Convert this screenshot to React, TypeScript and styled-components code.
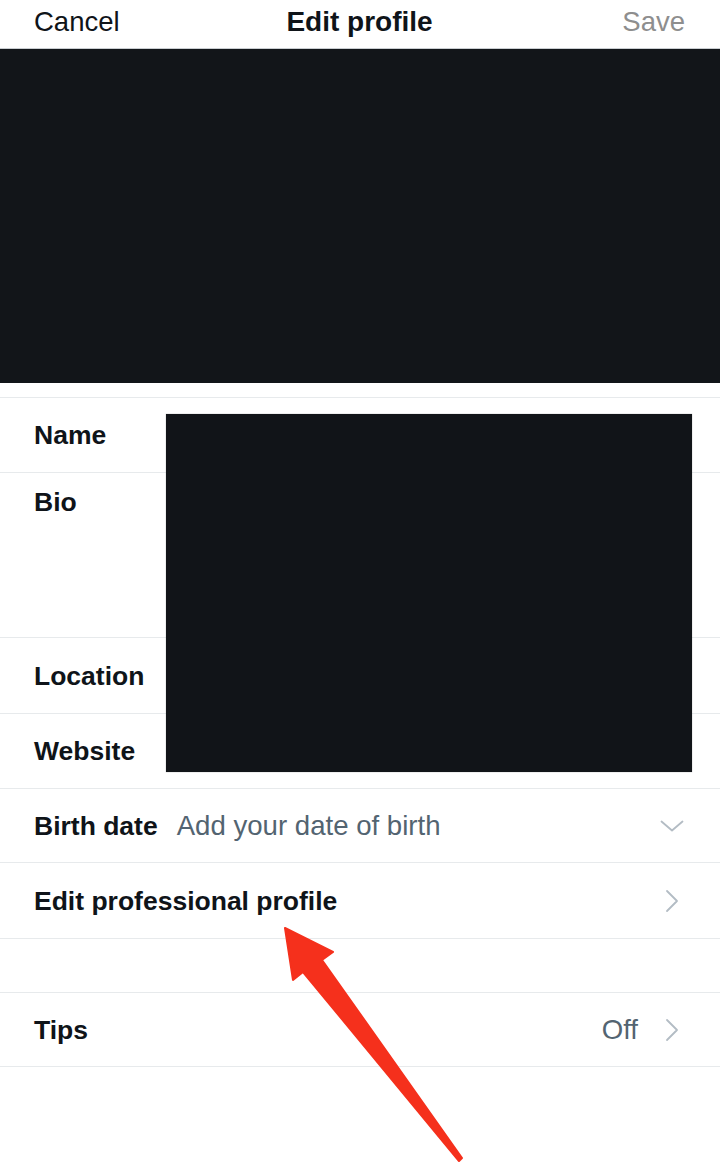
import React from 'react';
import styled, { createGlobalStyle } from 'styled-components';

const GlobalStyle = createGlobalStyle`
  html, body {
    margin: 0;
    padding: 0;
    background: #ffffff;
  }

  body {
    font-family: "Liberation Sans", Arial, sans-serif;
    color: #0f1419;
  }
`;

const Page = styled.div`
  position: relative;
  width: 720px;
  height: 1174px;
  overflow: hidden;
  background: #ffffff;
`;

const TopBar = styled.header`
  display: grid;
  grid-template-columns: 1fr auto 1fr;
  align-items: center;
  height: 49px;
  padding: 0 35px 4px 34px;
  box-sizing: border-box;
  border-bottom: 1px solid #c9cdd1;
  font-size: 27.5px;
`;

const BarButton = styled.span<{ $muted?: boolean; $end?: boolean }>`
  justify-self: ${({ $end }) => ($end ? 'end' : 'start')};
  color: ${({ $muted }) => ($muted ? '#8e8e8e' : '#0f1419')};
`;

const Title = styled.h1`
  margin: 0;
  font-size: 28px;
  font-weight: 700;
  color: #0f1419;
`;

const Banner = styled.div`
  height: 334px;
  background: #121519;
`;

const Form = styled.section`
  padding-top: 14px;
`;

const FieldGroup = styled.div`
  position: relative;
`;

const Row = styled.div<{ $height: number; $top?: boolean }>`
  display: flex;
  align-items: ${({ $top }) => ($top ? 'flex-start' : 'center')};
  height: ${({ $height }) => $height}px;
  padding: ${({ $top }) => ($top ? '16px' : '0')} 36px 0 34px;
  border-top: 1px solid #e7eaec;
  box-sizing: border-box;

  &:last-child {
    border-bottom: 1px solid #e7eaec;
  }
`;

const Spacer = styled.div`
  height: 54px;
  border-top: 1px solid #e7eaec;
  box-sizing: border-box;
`;

const Label = styled.span`
  font-size: 26.5px;
  font-weight: 700;
  line-height: 26px;
  color: #0f1419;
  white-space: nowrap;
`;

const Value = styled.span<{ $grow?: boolean }>`
  flex: ${({ $grow }) => ($grow ? 1 : 'none')};
  margin-left: ${({ $grow }) => ($grow ? '19px' : '0')};
  font-size: 27.6px;
  color: #536471;
  white-space: nowrap;
`;

const Trailing = styled.div`
  display: flex;
  align-items: center;
  gap: 22px;
  margin-left: auto;
`;

const ChevronBox = styled.span`
  display: flex;
  align-items: center;
  justify-content: center;
  width: 24px;
  height: 24px;
`;

// redaction block laid over the name / bio / location / website values
const Redaction = styled.div`
  position: absolute;
  top: 17px;
  left: 166px;
  right: 28px;
  bottom: 16px;
  background: #111418;
  box-shadow: 0 0 1px rgba(0, 0, 0, 0.4);
`;

const Annotation = styled.svg`
  position: absolute;
  inset: 0;
  pointer-events: none;
`;

function ChevronDown() {
  return (
    <ChevronBox>
      <svg width="24" height="12" viewBox="0 0 24 12" fill="none">
        <path d="M1.5 1.5 L12 10.5 L22.5 1.5" stroke="#b3bcc4" strokeWidth="1.8" strokeLinecap="round" strokeLinejoin="round" />
      </svg>
    </ChevronBox>
  );
}

function ChevronRight() {
  return (
    <ChevronBox>
      <svg width="24" height="24" viewBox="0 0 24 24" fill="none">
        <path d="M7 2 L17 12 L7 22" stroke="#b3bcc4" strokeWidth="1.8" strokeLinecap="round" strokeLinejoin="round" />
      </svg>
    </ChevronBox>
  );
}

export default function App() {
  return (
    <>
      <GlobalStyle />
      <Page>
        <TopBar>
          <BarButton>Cancel</BarButton>
          <Title>Edit profile</Title>
          <BarButton $muted $end>Save</BarButton>
        </TopBar>
        <Banner />
        <Form>
          <FieldGroup>
            <Row $height={75}>
              <Label>Name</Label>
            </Row>
            <Row $height={165} $top>
              <Label>Bio</Label>
            </Row>
            <Row $height={76}>
              <Label>Location</Label>
            </Row>
            <Row $height={75}>
              <Label>Website</Label>
            </Row>
            <Redaction />
          </FieldGroup>
          <Row $height={74}>
            <Label>Birth date</Label>
            <Value $grow>Add your date of birth</Value>
            <ChevronDown />
          </Row>
          <Row $height={76}>
            <Label>Edit professional profile</Label>
            <Trailing>
              <ChevronRight />
            </Trailing>
          </Row>
          <Spacer />
          <Row $height={75}>
            <Label>Tips</Label>
            <Trailing>
              <Value>Off</Value>
              <ChevronRight />
            </Trailing>
          </Row>
        </Form>
        <Annotation width="720" height="1174" viewBox="0 0 720 1174">
          <polygon
            points="285,928 333,952 322,960 462,1158 459,1161 303,972 293,980"
            fill="#f5301c"
            stroke="#f5301c"
            strokeWidth="2"
            strokeLinejoin="round"
          />
        </Annotation>
      </Page>
    </>
  );
}
